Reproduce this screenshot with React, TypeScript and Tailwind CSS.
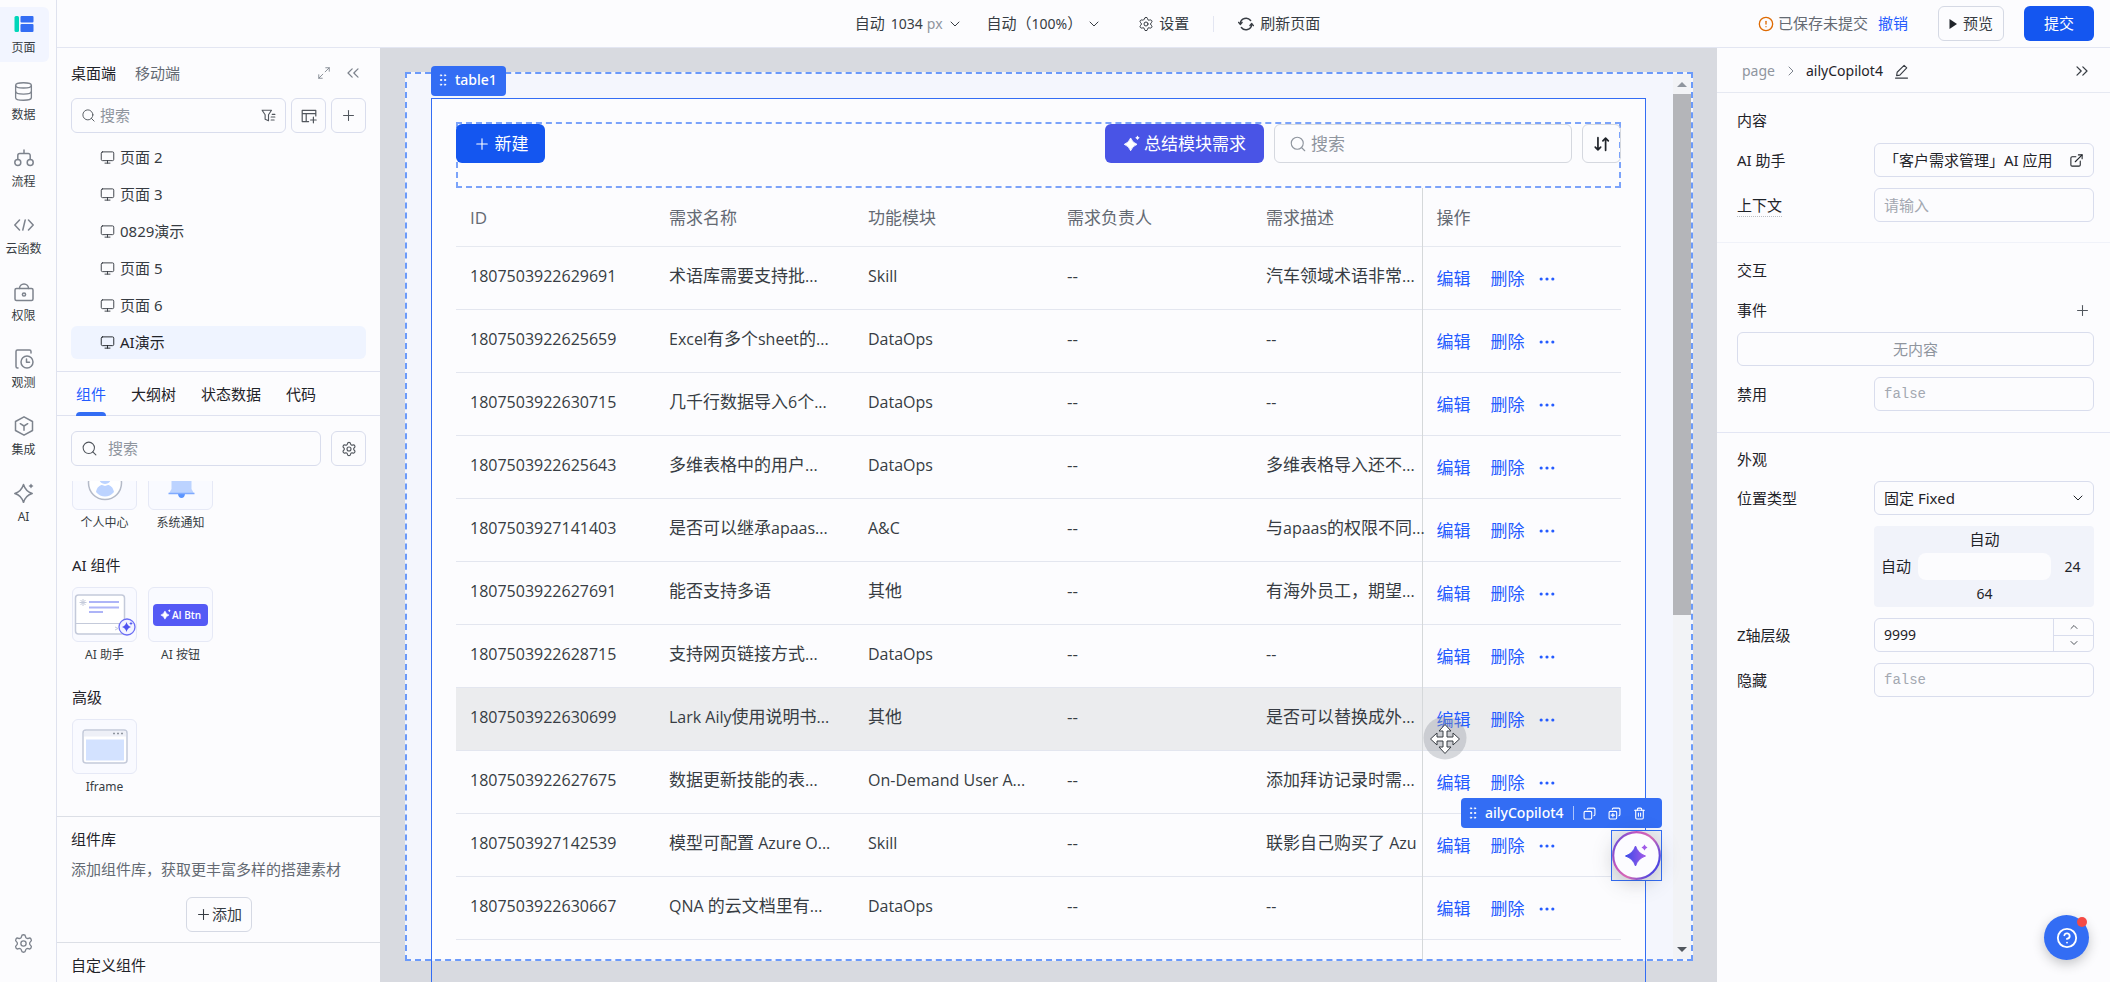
import type { ReactNode } from "react";
import {
    ChevronDown,
    ChevronRight,
    ChevronsLeft,
    ChevronsRight,
    ChevronUp,
    CircleAlert,
    CircleQuestionMark,
    Copy,
    CopyPlus,
    Database,
    Ellipsis,
    ExternalLink,
    GripVertical,
    Maximize2,
    Monitor,
    Plus,
    Search,
    Settings,
    Trash2,
} from "lucide-react";

const rows = [
    { id: "1807503922629691", name: "术语库需要支持批...", module: "Skill", desc: "汽车领域术语非常..." },
    { id: "1807503922625659", name: "Excel有多个sheet的...", module: "DataOps", desc: "--" },
    { id: "1807503922630715", name: "几千行数据导入6个...", module: "DataOps", desc: "--" },
    { id: "1807503922625643", name: "多维表格中的用户...", module: "DataOps", desc: "多维表格导入还不..." },
    { id: "1807503927141403", name: "是否可以继承apaas...", module: "A&C", desc: "与apaas的权限不同..." },
    { id: "1807503922627691", name: "能否支持多语", module: "其他", desc: "有海外员工，期望..." },
    { id: "1807503922628715", name: "支持网页链接方式...", module: "DataOps", desc: "--" },
    { id: "1807503922630699", name: "Lark Aily使用说明书...", module: "其他", desc: "是否可以替换成外..." },
    { id: "1807503922627675", name: "数据更新技能的表...", module: "On-Demand User A...", desc: "添加拜访记录时需..." },
    { id: "1807503927142539", name: "模型可配置 Azure O...", module: "Skill", desc: "联影自己购买了 Azu" },
    { id: "1807503922630667", name: "QNA 的云文档里有...", module: "DataOps", desc: "--" },
];

const HOVERED_ROW = "1807503922630699";

const pages = ["页面 2", "页面 3", "0829演示", "页面 5", "页面 6", "AI演示"];

const panelTabs = ["组件", "大纲树", "状态数据", "代码"];

const Svg = ({ size = 20, children, className }: { size?: number; children: ReactNode; className?: string }) => (
    <svg width={size} height={size} viewBox="0 0 20 20" fill="none" stroke="currentColor" strokeWidth="1.5" strokeLinejoin="round" strokeLinecap="round" className={className} aria-hidden="true">
        {children}
    </svg>
);

const PageIcon = () => (
    <svg width="20" height="20" viewBox="0 0 20 20" aria-hidden="true">
        <rect x="0.5" y="2" width="4.5" height="16" rx="1.5" fill="#00d6b9" />
        <rect x="6.5" y="2" width="13" height="6.5" rx="1" fill="#336df4" />
        <rect x="6.5" y="10" width="13" height="8" rx="1" fill="#336df4" />
    </svg>
);

const FlowIcon = () => (
    <Svg>
        <circle cx="3.8" cy="14.5" r="3" />
        <circle cx="16.2" cy="14.5" r="3" />
        <path d="M3.8 11.5V7.5a2 2 0 0 1 2-2h8.4a2 2 0 0 1 2 2v4M10 5.5V2" />
    </Svg>
);

const CodeIcon = () => (
    <Svg>
        <path d="M5.500 5 .8 10l4.700 5M14.500 5l4.700 5-4.700 5M11.200 5 8.800 15" />
    </Svg>
);

const LockIcon = () => (
    <Svg>
        <rect x="1" y="6.500" width="18" height="12" rx="1.5" />
        <path d="M5.500 6.500a4.500 4.500 0 0 1 9 0" />
        <circle cx="10" cy="12.5" r="1.6" />
    </Svg>
);

const WatchIcon = () => (
    <Svg>
        <path d="M17 4V2.500a1.500 1.500 0 0 0-1.500-1.500h-12A1.500 1.500 0 0 0 2 2.500v15A1.500 1.500 0 0 0 3.500 19H4" />
        <circle cx="13" cy="13" r="6" />
        <path d="M12.500 10v3.200h3" />
    </Svg>
);

const BoxIcon = () => (
    <Svg>
        <path d="M10 0.800 18.500 5.500v9L10 19.200 1.500 14.500v-9z" />
        <path d="M6.300 7.700 10 10l3.700-2.300M10 10v4.300" />
    </Svg>
);

const SparkOutline = () => (
    <Svg>
        <path d="M9.500 1.500C11 6.500 13 8.800 18.200 10.500 13 12 11 14.500 9.500 19.500 8 14.500 6 12 .8 10.500 6 8.800 8 6.500 9.500 1.500z" />
        <path d="M17 .5q.6 1.900 2.500 2.500-1.900.6-2.500 2.500-.6-1.900-2.500-2.500 1.900-.6 2.500-2.500z" fill="currentColor" strokeWidth="0" />
    </Svg>
);

const Spark = ({ size = 16, fill = "currentColor" }: { size?: number; fill?: string }) => (
    <svg width={size} height={size} viewBox="0 0 20 20" fill={fill} aria-hidden="true">
        <path d="M9 3.500q2 5.500 7.500 7.500-5.500 2-7.500 7.500-2-5.500-7.500-7.500 5.500-2 7.500-7.500z" stroke={fill} strokeWidth="1" strokeLinejoin="round" />
        <path d="M17 .5q.8 2 2.700 2.700-1.900.8-2.700 2.700-.8-1.900-2.700-2.700 1.900-.7 2.700-2.700z" />
    </svg>
);

const railItems = [
    { label: "页面", icon: <PageIcon /> },
    { label: "数据", icon: <Database size={21} strokeWidth={1.5} /> },
    { label: "流程", icon: <FlowIcon /> },
    { label: "云函数", icon: <CodeIcon /> },
    { label: "权限", icon: <LockIcon /> },
    { label: "观测", icon: <WatchIcon /> },
    { label: "集成", icon: <BoxIcon /> },
    { label: "AI", icon: <SparkOutline /> },
];

const Rail = () => (
    <nav className="flex w-[57px] shrink-0 flex-col border-r border-[#dfe2ee] pt-[7px]">
        {railItems.map((item, i) => (
            <button
                key={item.label}
                type="button"
                className={`mb-3 flex h-[55px] w-[49px] flex-col items-center rounded-r-md pt-[7px] pr-[2px] text-xs leading-4 text-[#373c43] ${i === 0 ? "bg-[#f2f5ff]" : ""}`}
            >
                <span className="flex h-5 items-center text-[#7d838d]">{item.icon}</span>
                <span className="mt-[6px] whitespace-nowrap">{item.label}</span>
            </button>
        ))}
        <button type="button" aria-label="设置" className="mt-auto mb-7 flex w-[47px] justify-center text-[#7d838d]">
            <Settings size={21} strokeWidth={1.5} />
        </button>
    </nav>
);

const TopBar = () => (
    <header className="flex h-12 shrink-0 items-center border-b border-[#e3e6f2] pr-4 pl-6 text-[15px] text-[#373c43]">
        <div className="flex-1" />
        <div className="flex items-center">
            <button type="button" className="flex items-center">
                <span>自动</span>
                <span className="ml-[6px] text-sm">1034</span>
                <span className="ml-1 text-sm text-[#8f959e]">px</span>
                <ChevronDown size={16} strokeWidth={1.5} className="ml-1" />
            </button>
            <button type="button" className="ml-6 flex items-center">
                自动（<span className="text-sm">100%</span>）
                <ChevronDown size={16} strokeWidth={1.5} className="ml-1" />
            </button>
            <button type="button" className="ml-9 flex items-center gap-[5px]">
                <Settings size={16} strokeWidth={1.5} />
                设置
            </button>
            <span className="mx-6 h-4 w-px bg-[#e3e6f2]" />
            <button type="button" className="flex items-center gap-[6px]">
                <Svg size={16}>
                    <path d="M2.800 9.200a7.300 7.300 0 0 1 13-3.600M17.200 10.800a7.300 7.300 0 0 1-13 3.600" strokeWidth="1.800" />
                    <path d="M.8 8 2.800 10.500 5 8M15 12l2.200-2.500 2 2.500" strokeWidth="1.800" />
                </Svg>
                刷新页面
            </button>
        </div>
        <div className="flex flex-1 items-center justify-end">
            <CircleAlert size={16} strokeWidth={2} className="text-[#de6a02]" />
            <span className="ml-1 text-[#646a73]">已保存未提交</span>
            <button type="button" className="ml-[10px] text-[#245bff]">撤销</button>
            <button type="button" className="ml-[30px] flex h-[35px] w-[66px] items-center justify-center gap-[6px] rounded-md border border-[#d5d9e4]">
                <svg width="8" height="12" viewBox="0 0 8 12" aria-hidden="true"><path d="M.5 1v10L8 6z" fill="#1f2329" /></svg>
                预览
            </button>
            <button type="button" className="ml-5 h-[35px] w-[70px] rounded-md bg-[#1456f0] text-white">提交</button>
        </div>
    </header>
);

const IconButton = ({ label, children }: { label: string; children: ReactNode }) => (
    <button type="button" aria-label={label} className="flex h-[35px] w-[35px] shrink-0 items-center justify-center rounded-md border border-[#d9dded] text-[#51565d]">
        {children}
    </button>
);

const Card = ({ label, children }: { label: string; children: ReactNode }) => (
    <button type="button" className="flex w-[65px] flex-col items-center text-xs leading-4 text-[#373c43]">
        <span className="flex h-[55px] w-full items-center justify-center rounded-md border border-[#e6e9f6] bg-[#f9faff]">{children}</span>
        <span className="mt-[5px]">{label}</span>
    </button>
);

const LeftPanel = () => (
    <aside className="flex w-[323px] shrink-0 flex-col text-[15px] text-[#1f2329]">
        <div className="flex items-center pt-[14px] pr-[17px] pl-[14px] leading-[22px]">
            <button type="button">桌面端</button>
            <button type="button" className="ml-[19px] text-[#646a73]">移动端</button>
            <button type="button" aria-label="展开" className="ml-auto text-[#7d838d]"><Maximize2 size={14} strokeWidth={1.500} /></button>
            <button type="button" aria-label="收起" className="ml-3 text-[#7d838d]"><ChevronsLeft size={20} strokeWidth={1.500} /></button>
        </div>
        <div className="mt-[14px] flex gap-[5px] pr-[14px] pl-[14px]">
            <label className="flex h-[35px] min-w-0 flex-1 items-center rounded-md border border-[#d9dded] px-[9px]">
                <Search size={15} strokeWidth={1.500} className="shrink-0 text-[#51565d]" />
                <input aria-label="搜索页面" placeholder="搜索" className="ml-1 min-w-0 flex-1 outline-none placeholder:text-[#8f959e]" />
                <Svg size={15} className="text-[#51565d]">
                    <path d="M1.500 3h12.500L10 9v8l-4.500-2V9z" />
                    <path d="M13.500 12h5M13.500 16h4M15 8.500h3.500" />
                </Svg>
            </label>
            <IconButton label="新建布局">
                <Svg size={16}>
                    <path d="M9.500 17H1.500V3h17v7M1.500 7h17M6.500 7v10M15.500 11.500v7M12 15h7" />
                </Svg>
            </IconButton>
            <IconButton label="新建页面"><Plus size={17} strokeWidth={1.500} /></IconButton>
        </div>
        <ul className="mt-2 px-[14px]">
            {pages.map((page) => (
                <li key={page} className="mb-1">
                    <button type="button" className={`flex h-[33px] w-full items-center gap-[5px] rounded-md pl-[29px] ${page === "AI演示" ? "bg-[#eff4ff]" : "text-[#373c43]"}`}>
                        <Monitor size={15} strokeWidth={1.500} />
                        {page}
                    </button>
                </li>
            ))}
        </ul>
        <div role="tablist" className="mt-2 flex h-[45px] shrink-0 gap-[25px] border-y border-[#dfe2f0] pl-[19px]">
            {panelTabs.map((tab, i) => (
                <button key={tab} type="button" role="tab" aria-selected={i === 0} className={`relative h-[44px] ${i === 0 ? "text-[#245bff]" : ""}`}>
                    {tab}
                    {i === 0 && <span className="absolute inset-x-0 bottom-0 h-1 rounded-t bg-[#336df4]" />}
                </button>
            ))}
        </div>
        <div className="mt-[15px] flex gap-[10px] px-[14px]">
            <label className="flex h-[35px] min-w-0 flex-1 items-center rounded-md border border-[#d9dded] px-[9px]">
                <Search size={17} strokeWidth={1.500} className="shrink-0 text-[#51565d]" />
                <input aria-label="搜索组件" placeholder="搜索" className="ml-[10px] min-w-0 flex-1 outline-none placeholder:text-[#8f959e]" />
            </label>
            <IconButton label="组件设置"><Settings size={16} strokeWidth={1.700} /></IconButton>
        </div>
        <div className="mt-[15px] flex min-h-0 flex-1 flex-col overflow-hidden px-[15px]">
            <div className="-mt-[26px] flex shrink-0 gap-[11px]">
                <Card label="个人中心">
                    <svg width="36" height="36" viewBox="0 0 36 36" aria-hidden="true">
                        <circle cx="18" cy="18" r="16.500" fill="#fff" stroke="#b4bac8" strokeWidth="1.500" />
                        <circle cx="18" cy="13" r="6" fill="#bcd3ff" />
                        <path d="M9 27c1-5 4-7 6-7l3 1 3-1c2 0 5 2 6 7-5 6-13 6-18 0z" fill="#bcd3ff" />
                    </svg>
                </Card>
                <Card label="系统通知">
                    <svg width="32" height="32" viewBox="0 0 32 32" aria-hidden="true">
                        <path d="M13 27h7q-.5 4-3.500 4T13 27z" fill="#5a94ff" />
                        <path d="M4 26.500 6.500 22V12a10 10 0 0 1 20 0v10l2.500 4.500z" fill="#bcd3ff" />
                        <path d="M3.500 26.500h26" stroke="#7faaff" strokeWidth="1.500" />
                    </svg>
                </Card>
            </div>
            <h3 className="mt-[23px] shrink-0 leading-[22px]">AI 组件</h3>
            <div className="mt-[11px] flex shrink-0 gap-[11px]">
                <Card label="AI 助手">
                    <svg width="62" height="42" viewBox="0 0 62 42" fill="none" aria-hidden="true">
                        <rect x="1.500" y="1" width="49" height="39" rx="3" fill="#fff" stroke="#c4cada" strokeWidth="1.500" />
                        <path d="M2 29.500h48" stroke="#c4cada" />
                        <path d="M15 8h30M15 13.500h30M15 18h14" stroke="#adb4f7" strokeWidth="2" />
                        <path d="M9 5v7M5.500 8.500h7M6.500 6l5 5M11.500 6l-5 5" stroke="#c4cada" />
                        <path d="m41 33 3 1.500-3 1.500" stroke="#c4cada" />
                        <circle cx="53" cy="33" r="8" fill="#f3f4ff" stroke="#6b6ef5" strokeWidth="1.300" />
                        <path d="M52.500 28q1 4 4.500 5-3.500 1-4.500 5-1-4-4.500-5 3.500-1 4.500-5zM57 27.500l.6 1.400 1.400.6-1.400.6-.6 1.400-.6-1.400-1.400-.6 1.400-.6z" fill="#5055f0" />
                    </svg>
                </Card>
                <Card label="AI 按钮">
                    <span className="flex h-[22px] w-[55px] items-center justify-center gap-px rounded bg-[#5459f5] font-['Open_Sans',sans-serif] text-[10px] font-semibold text-white">
                        <Spark size={11} />
                        AI Btn
                    </span>
                </Card>
            </div>
            <h3 className="mt-[23px] shrink-0 leading-[22px]">高级</h3>
            <div className="mt-[11px] flex shrink-0">
                <Card label="Iframe">
                    <svg width="46" height="36" viewBox="0 0 46 36" aria-hidden="true">
                        <rect x="1" y="1" width="44" height="33" rx="3" fill="#fff" stroke="#c4cada" strokeWidth="1.500" />
                        <path d="M2 7.500V4q0-2 2-2h38q2 0 2 2v3.500z" fill="#eef0f7" />
                        <rect x="4" y="10.500" width="38" height="21" fill="#d3e2ff" />
                        <path d="M31 4.500h2M35 4.500h2M39 4.500h2" stroke="#8f959e" strokeWidth="1.500" />
                    </svg>
                </Card>
            </div>
        </div>
        <section className="flex h-[126px] shrink-0 flex-col border-t border-[#dcdfe6] px-[14px] pt-[11px]">
            <h3 className="leading-[22px]">组件库</h3>
            <p className="mt-2 whitespace-nowrap leading-[22px] text-[#646a73]">添加组件库，获取更丰富多样的搭建素材</p>
            <button type="button" className="mt-[17px] flex h-[35px] w-[66px] items-center justify-center self-center rounded-md border border-[#d5d9e4] text-[#373c43]">
                <Plus size={17} strokeWidth={1.500} />
                添加
            </button>
        </section>
        <section className="h-[40px] shrink-0 border-t border-[#dcdfe6] px-[14px] pt-[11px]">
            <h3 className="leading-[22px]">自定义组件</h3>
        </section>
    </aside>
);

// Latin runs look too large next to the Chinese glyphs, so they go one step down
const MixedText = ({ text }: { text: string }) => (
    <>
        {text.split(/([\x20-\x7e]+)/).map((part, i) => (i % 2 ? <span key={i} className="text-base">{part}</span> : part))}
    </>
);

const DataTable = () => (
    <table className="w-full table-fixed border-collapse text-left text-[17px] text-[#373c43]">
        <colgroup>
            <col className="w-[199px]" />
            <col className="w-[199px]" />
            <col className="w-[199px]" />
            <col className="w-[199px]" />
            <col />
            <col className="w-[199px]" />
        </colgroup>
        <thead>
            <tr className="h-[58px] border-b border-[#e6e9f0] text-[#646a73]">
                {["ID", "需求名称", "功能模块", "需求负责人", "需求描述"].map((title) => (
                    <th key={title} scope="col" className="pt-[2px] pl-[14px] font-normal whitespace-nowrap">{title}</th>
                ))}
                <th scope="col" className="border-l border-[#d5d8da] pt-[2px] pl-[14px] font-normal">操作</th>
            </tr>
        </thead>
        <tbody>
            {rows.map((row) => (
                <tr key={row.id} className={`h-[63px] border-b border-[#e3e6ef] ${row.id === HOVERED_ROW ? "bg-[#ebecee]" : ""}`}>
                    <td className="pb-1 pl-[14px] text-base">{row.id}</td>
                    <td className="pb-1 pl-[14px] whitespace-nowrap"><MixedText text={row.name} /></td>
                    <td className="pb-1 pl-[14px] whitespace-nowrap"><MixedText text={row.module} /></td>
                    <td className="pb-1 pl-[14px]">--</td>
                    <td className="pb-1 pl-[14px] whitespace-nowrap"><MixedText text={row.desc} /></td>
                    <td className="border-l border-[#d5d8da] pt-[2px] pl-[14px] text-[#245bff]">
                        <div className="flex items-center">
                            <button type="button">编辑</button>
                            <button type="button" className="ml-5">删除</button>
                            <button type="button" aria-label="更多" className="ml-3"><Ellipsis size={20} strokeWidth={1.800} /></button>
                        </div>
                    </td>
                </tr>
            ))}
            <tr className="h-6" aria-hidden="true">
                <td colSpan={5} />
                <td className="border-l border-[#d5d8da]" />
            </tr>
        </tbody>
    </table>
);

const CopilotOverlay = () => (
    <div className="absolute right-[55px] bottom-[101px] flex flex-col items-end">
        <div className="mb-[2px] flex h-[30px] w-[201px] items-center rounded bg-[#336df4] pl-1 text-white">
            <GripVertical size={16} strokeWidth={1.500} />
            <span className="ml-1 text-sm font-medium">ailyCopilot4</span>
            <span className="mx-[9px] h-[14px] w-px bg-white/60" />
            <button type="button" aria-label="复制"><Copy size={13} strokeWidth={2} className="-scale-x-100" /></button>
            <button type="button" aria-label="创建副本" className="ml-3"><CopyPlus size={13} strokeWidth={2} className="-scale-x-100" /></button>
            <button type="button" aria-label="删除组件" className="ml-3"><Trash2 size={13} strokeWidth={2} /></button>
        </div>
        <button type="button" aria-label="AI 助手" className="border border-[#336df4] bg-[#eceef2]">
            <svg width="49" height="49" viewBox="0 0 49 49" className="overflow-visible drop-shadow-[0_4px_10px_rgba(31,35,41,0.2)]" aria-hidden="true">
                <defs>
                    <linearGradient id="ring" x1="0" y1="0" x2="1" y2="0.600">
                        <stop offset="0" stopColor="#4a4de0" />
                        <stop offset="0.350" stopColor="#c055c0" />
                        <stop offset="0.650" stopColor="#d86ab5" />
                        <stop offset="1" stopColor="#5046e0" />
                    </linearGradient>
                    <linearGradient id="star" x1="0" y1="0" x2="1" y2="0">
                        <stop offset="0" stopColor="#3b49e8" />
                        <stop offset="1" stopColor="#a05ae8" />
                    </linearGradient>
                </defs>
                <circle cx="24.500" cy="24.500" r="23.300" fill="#fcfcff" stroke="url(#ring)" strokeWidth="2.200" />
                <path d="M23.500 15q2.500 7.500 10 10-7.500 2.500-10 10-2.500-7.500-10-10 7.500-2.500 10-10z" fill="url(#star)" stroke="url(#star)" strokeWidth="1" strokeLinejoin="round" />
                <path d="M32.500 13.500q.8 2.200 3 3-2.200.8-3 3-.8-2.200-3-3 2.200-.8 3-3z" fill="#a05ae8" />
            </svg>
        </button>
    </div>
);

const MoveCursor = () => (
    <svg width="44" height="44" viewBox="0 0 44 44" className="absolute top-[669px] left-[1043px]" aria-hidden="true">
        <circle cx="22" cy="21" r="21.500" fill="#8f959e" fillOpacity="0.350" />
        <path d="M22 7.500 28 14h-4v6h6v-4l6.500 6-6.500 6v-4h-6v6h4l-6 6.500L16 30h4v-6h-6v4l-6.500-6L14 16v4h6v-6h-4z" fill="#fff" stroke="#373c43" strokeLinejoin="round" />
    </svg>
);

const Canvas = () => (
    <main className="relative min-w-0 flex-1 overflow-hidden bg-[#d8dae0] pt-6 pr-6 pb-[21px] pl-[25px] font-['Open_Sans','Noto_Sans_CJK_SC',sans-serif]">
        <div className="flex h-full border-2 border-dashed border-[#6b9afa] bg-[#f4f6fd]">
            <div className="min-w-0 flex-1 overflow-hidden pt-6 pr-[27px] pl-6">
                <div className="min-h-full bg-[#fcfcfe] px-[25px] pt-6">
                    <div className="flex h-[66px] gap-[10px] border-2 border-dashed border-[#7ba3fa] text-[17px]">
                        <button type="button" className="-ml-[2px] flex h-[39px] w-[89px] items-center justify-center gap-1 rounded-md bg-[#1456f0] text-white">
                            <Plus size={18} strokeWidth={1.500} />
                            新建
                        </button>
                        <button type="button" className="ml-auto flex h-[39px] w-[159px] items-center justify-center gap-1 rounded-md bg-[#4954e6] text-white">
                            <Spark size={17} />
                            总结模块需求
                        </button>
                        <label className="flex h-[39px] w-[298px] items-center rounded-md border border-[#d5d8df] px-[14px]">
                            <Search size={18} strokeWidth={1.500} className="text-[#8f959e]" />
                            <input aria-label="搜索需求" placeholder="搜索" className="ml-1 min-w-0 flex-1 outline-none placeholder:text-[#8f959e]" />
                        </label>
                        <button type="button" aria-label="排序" className="-mr-[2px] flex h-[39px] w-[39px] items-center justify-center rounded-md border border-[#d5d8df] text-[#1f2329]">
                            <Svg size={18}>
                                <path d="M5.500 3v13.500M2.500 13.500l3 3 3-3M14 17V3.500M11 6.500l3-3 3 3" strokeWidth="1.900" />
                            </Svg>
                        </button>
                    </div>
                    <DataTable />
                </div>
            </div>
            <div className="flex w-[18px] shrink-0 flex-col items-center bg-[#f2f3f6]">
                <span className="flex h-5 items-center">
                    <svg width="10" height="5" viewBox="0 0 10 5" aria-hidden="true"><path d="M0 5h10L5 0z" fill="#8f959e" /></svg>
                </span>
                <span className="h-[521px] w-full bg-[#b4b5b9]" />
                <span className="mt-auto flex h-5 items-center">
                    <svg width="10" height="5" viewBox="0 0 10 5" aria-hidden="true"><path d="M0 0h10L5 5z" fill="#51565d" /></svg>
                </span>
            </div>
        </div>
        <div className="pointer-events-none absolute top-[50px] right-[71px] bottom-0 left-[51px] border border-b-0 border-[#336df4]" />
        <div className="absolute top-[18px] left-[51px] flex h-[30px] w-[75px] items-center rounded bg-[#336df4] pb-[2px] pl-1 font-['Noto_Sans','Noto_Sans_CJK_SC',sans-serif] text-sm font-medium text-white">
            <GripVertical size={16} strokeWidth={1.500} />
            <span className="ml-1">table1</span>
        </div>
        <MoveCursor />
        <div className="font-['Noto_Sans','Noto_Sans_CJK_SC',sans-serif]">
            <CopilotOverlay />
        </div>
    </main>
);

const Field = ({ label, id, children }: { label: string; id?: string; children: ReactNode }) => (
    <div className="mt-[11px] flex items-start">
        <label htmlFor={id} className="w-[137px] shrink-0 leading-[34px]">{label}</label>
        <div className="min-w-0 flex-1">{children}</div>
    </div>
);

const inputClass = "h-[34px] w-full rounded-md border border-[#d9dded] px-[9px] outline-none placeholder:text-[#a3a8b1]";

const RightPanel = () => (
    <aside className="w-[393px] shrink-0 text-[15px] text-[#1f2329]">
        <div className="flex h-[45px] items-center border-b border-[#e6e9f2] pt-[2px] pr-[18px] pl-[25px] text-sm">
            <a href="#page" className="text-[#8f959e]">page</a>
            <ChevronRight size={16} strokeWidth={1.500} className="ml-2 text-[#7d838d]" />
            <span className="ml-[7px]">ailyCopilot4</span>
            <button type="button" aria-label="重命名" className="ml-[11px] text-[#373c43]">
                <Svg size={15}>
                    <path d="M3.500 15.500 4.200 11 13.500 1.700l3.500 3.500L7.800 14.800zM2 18.800h16" />
                </Svg>
            </button>
            <button type="button" aria-label="收起属性" className="ml-auto text-[#373c43]"><ChevronsRight size={20} strokeWidth={1.500} /></button>
        </div>
        <section className="border-b border-[#f0f2f9] px-4 pt-4 pb-5 pl-5">
            <h3 className="leading-[22px]">内容</h3>
            <div className="mt-3">
                <Field label="AI 助手">
                    <a href="#app" className="flex h-[34px] items-center rounded-md border border-[#d9dded] px-[9px]">
                        <span className="flex-1 whitespace-nowrap">「客户需求管理」AI 应用</span>
                        <ExternalLink size={15} strokeWidth={1.700} />
                    </a>
                </Field>
            </div>
            <div className="mt-[11px] flex items-center">
                <div className="w-[137px] shrink-0">
                    <label htmlFor="context" className="border-b border-dotted border-[#bbbfc4] pb-px">上下文</label>
                </div>
                <input id="context" placeholder="请输入" className={inputClass} />
            </div>
        </section>
        <section className="border-b border-[#e3e6f4] px-4 pt-4 pb-[21px] pl-5">
            <h3 className="leading-[22px]">交互</h3>
            <div className="mt-[18px] flex h-[22px] items-center justify-between">
                <span>事件</span>
                <button type="button" aria-label="添加事件" className="mr-[3px] text-[#51565d]"><Plus size={17} strokeWidth={1.500} /></button>
            </div>
            <div className="mt-[11px] flex h-[34px] items-center justify-center rounded-md border border-[#d9dded] text-[#8f959e]">无内容</div>
            <Field label="禁用" id="disabled">
                <input id="disabled" placeholder="false" className={`${inputClass} font-['Liberation_Mono',monospace] text-sm`} />
            </Field>
        </section>
        <section className="px-4 pt-[15px] pl-5">
            <h3 className="leading-[22px]">外观</h3>
            <Field label="位置类型" id="position">
                <div className="grid items-center">
                    <select id="position" className={`${inputClass} col-start-1 row-start-1 appearance-none`}>
                        <option>固定 Fixed</option>
                    </select>
                    <ChevronDown size={16} strokeWidth={1.500} className="pointer-events-none col-start-1 row-start-1 mr-2 justify-self-end" />
                </div>
            </Field>
            <Field label="">
                <div className="grid h-[81px] grid-cols-[44px_1fr_43px] grid-rows-3 place-items-center rounded bg-[#f1f3fa]">
                    <span className="col-start-2">自动</span>
                    <span className="col-start-1 row-start-2">自动</span>
                    <span className="col-start-2 row-start-2 h-full w-full rounded-lg bg-[#fcfcfe]" />
                    <span className="col-start-3 row-start-2 text-sm">24</span>
                    <span className="col-start-2 row-start-3 text-sm">64</span>
                </div>
            </Field>
            <Field label="Z轴层级" id="zindex">
                <div className="flex h-[34px] overflow-hidden rounded-md border border-[#d9dded]">
                    <input id="zindex" defaultValue="9999" className="min-w-0 flex-1 px-[9px] text-sm outline-none" />
                    <div className="flex w-10 flex-col border-l border-[#d9dded] text-[#51565d]">
                        <button type="button" aria-label="增加" className="flex flex-1 items-center justify-center border-b border-[#d9dded]"><ChevronUp size={12} /></button>
                        <button type="button" aria-label="减少" className="flex flex-1 items-center justify-center"><ChevronDown size={12} /></button>
                    </div>
                </div>
            </Field>
            <Field label="隐藏" id="hidden">
                <input id="hidden" placeholder="false" className={`${inputClass} font-['Liberation_Mono',monospace] text-sm`} />
            </Field>
        </section>
    </aside>
);

const App = () => (
    <div className="flex h-screen overflow-hidden bg-[#fcfcfe] font-['Noto_Sans','Noto_Sans_CJK_SC',sans-serif]">
        <Rail />
        <div className="flex min-w-0 flex-1 flex-col">
            <TopBar />
            <div className="flex min-h-0 flex-1">
                <LeftPanel />
                <Canvas />
                <RightPanel />
            </div>
        </div>
        <button type="button" aria-label="帮助" className="fixed right-[21px] bottom-[22px] flex size-[45px] items-center justify-center rounded-full bg-[#336df4] text-white shadow-[0_4px_12px_rgba(31,35,41,0.25)]">
            <CircleQuestionMark size={22} strokeWidth={2} />
            <span className="absolute top-[2px] right-[2px] size-[10px] rounded-full bg-[#f54a45]" />
        </button>
    </div>
);

export default App;
